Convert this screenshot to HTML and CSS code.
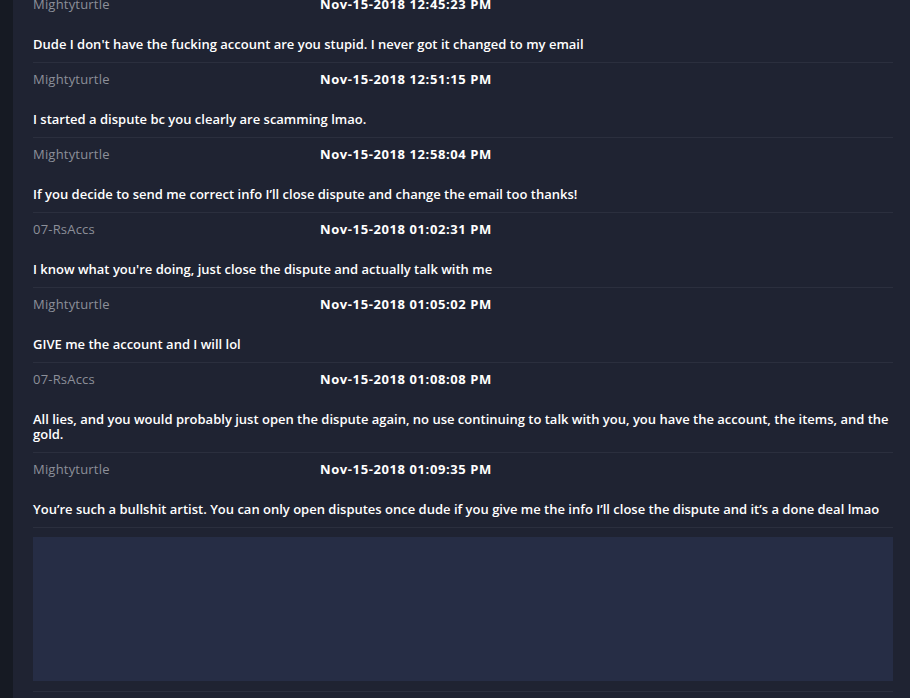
FILE: index.html
```html
<!DOCTYPE html>
<html>
<head>
<meta charset="utf-8">
<link rel="stylesheet" href="styles.css">
</head>
<body>
<div class="page">
  <div class="strip"></div>
  <div class="panel">
    <div class="thread">
      <div class="msg first">
        <div class="head"><span class="name">Mightyturtle</span><span class="date">Nov-15-2018 12:45:23 PM</span></div>
        <div class="text">Dude I don't have the fucking account are you stupid. I never got it changed to my email</div>
      </div>
      <div class="msg">
        <div class="head"><span class="name">Mightyturtle</span><span class="date">Nov-15-2018 12:51:15 PM</span></div>
        <div class="text">I started a dispute bc you clearly are scamming lmao.</div>
      </div>
      <div class="msg">
        <div class="head"><span class="name">Mightyturtle</span><span class="date">Nov-15-2018 12:58:04 PM</span></div>
        <div class="text">If you decide to send me correct info I’ll close dispute and change the email too thanks!</div>
      </div>
      <div class="msg">
        <div class="head"><span class="name">07-RsAccs</span><span class="date">Nov-15-2018 01:02:31 PM</span></div>
        <div class="text">I know what you're doing, just close the dispute and actually talk with me</div>
      </div>
      <div class="msg">
        <div class="head"><span class="name">Mightyturtle</span><span class="date">Nov-15-2018 01:05:02 PM</span></div>
        <div class="text">GIVE me the account and I will lol</div>
      </div>
      <div class="msg">
        <div class="head"><span class="name">07-RsAccs</span><span class="date">Nov-15-2018 01:08:08 PM</span></div>
        <div class="text">All lies, and you would probably just open the dispute again, no use continuing to talk with you, you have the account, the items, and the gold.</div>
      </div>
      <div class="msg">
        <div class="head"><span class="name">Mightyturtle</span><span class="date">Nov-15-2018 01:09:35 PM</span></div>
        <div class="text">You’re such a bullshit artist. You can only open disputes once dude if you give me the info I’ll close the dispute and it’s a done deal lmao</div>
      </div>
    </div>
    <div class="reply"></div>
    <div class="rule"></div>
  </div>
</div>
</body>
</html>
```
FILE: styles.css
```css
html, body {
  margin: 0;
  padding: 0;
  background: #1f2332;
  overflow: hidden;
}
.page {
  display: flex;
  height: 698px;
  font-family: "Open Sans", "Lato", sans-serif;
  font-size: 13px;
}
.strip {
  width: 13px;
  flex: none;
  background: #161a23;
}
.panel {
  flex: 1;
  background: #1f2332;
  padding: 0 17px 0 20px;
}
.thread {
  margin-top: -5px;
}
.msg {
  border-bottom: 1px solid #2b2f3e;
  padding: 7px 0 10px;
}
.msg.first {
  padding-top: 0;
}
.head {
  display: flex;
  height: 18px;
  line-height: 18px;
  margin-bottom: 24px;
}
.name {
  width: 287px;
  color: #8c8f99;
  font-weight: 400;
  letter-spacing: 0.2px;
}
.date {
  color: #ffffff;
  font-weight: 700;
  letter-spacing: 0.6px;
}
.text {
  color: #ffffff;
  font-weight: 600;
  line-height: 15px;
}
.reply {
  margin-top: 9px;
  height: 144px;
  background: #262d45;
}
.rule {
  margin-top: 10px;
  border-top: 1px solid #2b2f3e;
}
```
